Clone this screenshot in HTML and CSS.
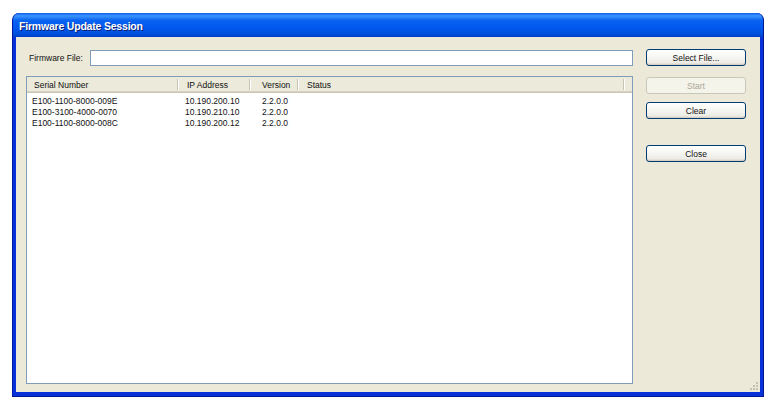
FILE: index.html
```html
<!DOCTYPE html>
<html lang="en">
<head>
    <meta charset="UTF-8">
    <title>Firmware Update Session</title>
    <link rel="stylesheet" href="styles.css">
</head>
<body>

    <div class="window">
        <div class="title-bar">Firmware Update Session</div>

        <div class="client">
            <!-- left side: file picker and device list -->
            <div class="main-col">
                <div class="file-row">
                    <label class="file-label">Firmware File:</label>
                    <div class="file-input"></div>
                </div>

                <div class="list-view">
                    <div class="list-header">
                        <div class="col col-serial">Serial Number</div>
                        <div class="col col-ip">IP Address</div>
                        <div class="col col-version">Version</div>
                        <div class="col col-status">Status</div>
                    </div>
                    <div class="list-row">
                        <div class="cell col-serial">E100-1100-8000-009E</div>
                        <div class="cell col-ip">10.190.200.10</div>
                        <div class="cell col-version">2.2.0.0</div>
                        <div class="cell col-status"></div>
                    </div>
                    <div class="list-row">
                        <div class="cell col-serial">E100-3100-4000-0070</div>
                        <div class="cell col-ip">10.190.210.10</div>
                        <div class="cell col-version">2.2.0.0</div>
                        <div class="cell col-status"></div>
                    </div>
                    <div class="list-row">
                        <div class="cell col-serial">E100-1100-8000-008C</div>
                        <div class="cell col-ip">10.190.200.12</div>
                        <div class="cell col-version">2.2.0.0</div>
                        <div class="cell col-status"></div>
                    </div>
                </div>
            </div>

            <!-- right side: buttons -->
            <div class="button-col">
                <button class="xp-button">Select File...</button>
                <button class="xp-button btn-start" disabled>Start</button>
                <button class="xp-button btn-clear">Clear</button>
                <button class="xp-button btn-close">Close</button>
            </div>

            <svg class="grip" width="10" height="10" viewBox="0 0 10 10">
                <rect x="7" y="1" width="2" height="2" fill="#c5c2b2"/>
                <rect x="4" y="4" width="2" height="2" fill="#c5c2b2"/>
                <rect x="7" y="4" width="2" height="2" fill="#c5c2b2"/>
                <rect x="1" y="7" width="2" height="2" fill="#c5c2b2"/>
                <rect x="4" y="7" width="2" height="2" fill="#c5c2b2"/>
                <rect x="7" y="7" width="2" height="2" fill="#c5c2b2"/>
            </svg>
        </div>
    </div>

</body>
</html>
```

FILE: styles.css
```css
body {
    margin: 0;
    padding: 13px 0 0 12px;
    background: #ffffff;
    font-family: "Liberation Sans", Arial, sans-serif;
    font-size: 8.5px;
    color: #111;
}
.window {
    width: 752px;
    height: 384px;
    display: flex;
    flex-direction: column;
    background: #0831d9;
    border-radius: 7px 7px 0 0;
    box-sizing: border-box;
    padding: 0 3px 4px 3px;
    border-left: 1px solid #0019a8;
    border-right: 1px solid #001890;
    border-bottom: 1px solid #001890;
}
.title-bar {
    height: 24px;
    margin: 0 -3px;
    padding-left: 6px;
    border-radius: 7px 7px 0 0;
    background: linear-gradient(to bottom, #0a5fe8 0%, #3d95ff 12%, #0a64f0 30%, #0058ee 60%, #0052dd 85%, #0040c8 100%);
    color: #fff;
    font-weight: bold;
    font-size: 10.5px;
    letter-spacing: -0.2px;
    line-height: 26px;
    text-shadow: 1px 1px 0 #0a1e72;
}
.client {
    flex: 1;
    display: flex;
    gap: 13px;
    background: #ece9d8;
    padding: 13px 14px 8px 10px;
    position: relative;
}
.main-col {
    width: 607px;
    display: flex;
    flex-direction: column;
}
.file-row {
    display: flex;
    align-items: center;
    height: 16px;
    margin-bottom: 10px;
}
.file-label {
    width: 61px;
    padding-left: 3px;
}
.file-input {
    flex: 1;
    height: 14px;
    background: #fff;
    border: 1px solid #7f9db9;
}
.list-view {
    flex: 1;
    background: #fff;
    border: 1px solid #7f9db9;
}
.list-header {
    display: flex;
    height: 14px;
    background: #ebeadb;
    border-bottom: 1px solid #d6d2c2;
    box-shadow: 0 1px 0 #cbc7b8;
    margin-bottom: 3px;
    line-height: 16px;
}
.list-header .col {
    position: relative;
    box-sizing: border-box;
}
.list-header .col::after {
    content: "";
    position: absolute;
    right: 0;
    top: 2px;
    height: 11px;
    border-left: 1px solid #c7c5b2;
    border-right: 1px solid #fff;
}
.list-row {
    display: flex;
    height: 11px;
    line-height: 12px;
}
.cell {
    box-sizing: border-box;
    white-space: nowrap;
}
.col-serial { width: 152px; padding-left: 5px; }
.col-ip { width: 72px; padding-left: 6px; }
.col-version { width: 48px; padding-left: 11px; }
.col-status { width: 326px; padding-left: 7px; }
.list-header .col-serial { padding-left: 7px; }
.list-header .col-ip { padding-left: 8px; }
.list-header .col-status { padding-left: 8px; }
.button-col {
    width: 100px;
    display: flex;
    flex-direction: column;
    margin-top: -1px;
}
.xp-button {
    height: 17px;
    width: 100px;
    padding: 0;
    font-family: "Liberation Sans", Arial, sans-serif;
    font-size: 8.5px;
    color: #111;
    border: 1px solid #003c74;
    border-radius: 3px;
    background: linear-gradient(to bottom, #ffffff 0%, #f7f7f4 40%, #ecebe6 85%, #d6d0c5 100%);
    box-shadow: inset 0 -1px 0 #d6d0c5;
}
.xp-button:disabled {
    color: #aca899;
    border-color: #c9c7ba;
    background: #f5f4ea;
    box-shadow: none;
}
.btn-start { margin-top: 11px; }
.btn-clear { margin-top: 8px; }
.btn-close { margin-top: 26px; }
.grip {
    position: absolute;
    right: 1px;
    bottom: 1px;
}
```
